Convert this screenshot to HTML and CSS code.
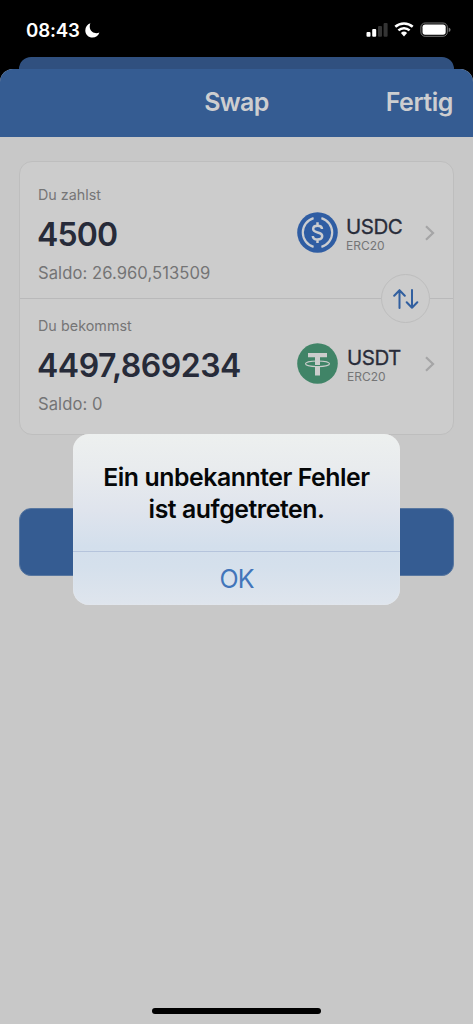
FILE: index.html
```html
<!DOCTYPE html>
<html lang="de">
<head>
<meta charset="utf-8">
<title>Swap</title>
<link rel="stylesheet" href="styles.css">
</head>
<body>
<div class="phone">
  <header class="status">
    <div class="clock"><span class="time">08:43</span>
      <svg class="moon" width="15" height="15" viewBox="0 0 15 15"><path d="M5.4.3C4 4 5 7 7.2 8.7 9.3 10.4 12.200 10.500 14.400 9.500 13.300 12.700 10.700 14.500 7.500 14.500 3.500 14.500.300 11.500.300 7.400.300 4.100 2.300 1.300 5.400.3Z" fill="#fff"/></svg>
    </div>
    <svg class="signals" width="86" height="18" viewBox="0 0 86 18">
      <rect x=".5" y="11" width="4" height="4.700" rx="1" fill="#fff"/>
      <rect x="6.200" y="8" width="4" height="7.700" rx="1" fill="#fff"/>
      <rect x="12" y="5" width="4" height="10.700" rx="1" fill="#343434"/>
      <rect x="17.600" y="2" width="4" height="13.700" rx="1" fill="#343434"/>
      <path d="M29.300 5.800A13 13 0 0 1 46.700 5.800M32.400 9.300A8.300 8.300 0 0 1 43.600 9.300" fill="none" stroke="#fff" stroke-width="2.500"/>
      <path d="M34.900 11.900A4.600 4.600 0 0 1 41.100 11.900L38 15.500Z" fill="#fff"/>
      <rect x="54.900" y="2" width="26.400" height="13.300" rx="4.200" fill="none" stroke="#777" stroke-width="1"/>
      <rect x="56.500" y="3.600" width="23.200" height="10.100" rx="2.600" fill="#fff"/>
      <path d="M82.700 6.400Q84.600 7 84.600 8.700T82.700 11Z" fill="#777"/>
    </svg>
  </header>
  <div class="back-sheet"></div>
  <main class="sheet">
    <nav class="navbar"><span></span><h1 class="title">Swap</h1><a class="done"><span class="done-text">Fertig</span></a></nav>
    <section class="card">
      <div class="row">
        <div class="amounts">
          <div class="label pay">Du zahlst</div>
          <div class="value v-pay">4500</div>
          <div class="balance b-pay">Saldo: 26.960,513509</div>
        </div>
        <div class="token">
          <svg width="41" height="41" viewBox="0 0 41 41"><circle cx="20.500" cy="20.500" r="20.300" fill="#2f5da3"/>
            <g fill="none" stroke="#cbcdd0" stroke-width="2.200"><path d="M16.600 6.100A15 15 0 0 0 16.600 34.900M24.400 6.100A15 15 0 0 1 24.400 34.900"/>
            <path stroke-width="2.500" d="M25 17C24.900 14.900 23.300 13.800 20.500 13.800 17.800 13.800 16.200 15 16.200 17 16.200 21.800 25.200 19 25.200 24 25.200 26.200 23.400 27.500 20.500 27.500 17.500 27.500 15.900 26.100 15.800 24M20.500 10.300V13.800M20.500 27.200V31"/></g></svg>
          <div class="names"><div class="symbol s-usdc">USDC</div><div class="network">ERC20</div></div>
          <svg class="chevron" width="12" height="18" viewBox="0 0 12 18"><path d="M2 2.200 9 9 2 15.800" fill="none" stroke="#a5a5a6" stroke-width="2.200"/></svg>
        </div>
      </div>
      <div class="row second">
        <div class="amounts">
          <div class="label get">Du bekommst</div>
          <div class="value v-get">4497,869234</div>
          <div class="balance b-get">Saldo: 0</div>
        </div>
        <div class="token">
          <svg width="41" height="41" viewBox="0 0 41 41"><circle cx="20.500" cy="20.500" r="20.300" fill="#408467"/>
            <path d="M11 10H30V14.300H23V32.500H18V14.300H11Z" fill="#cbcdcc"/>
            <ellipse cx="20.500" cy="20.800" rx="12" ry="2.800" fill="none" stroke="#cbcdcc" stroke-width="1.100"/><path d="M18 22.100H23V23Q20.500 23.200 18 23Z" fill="#408467"/></svg>
          <div class="names tether"><div class="symbol s-usdt">USDT</div><div class="network">ERC20</div></div>
          <svg class="chevron" width="12" height="18" viewBox="0 0 12 18"><path d="M2 2.200 9 9 2 15.800" fill="none" stroke="#a5a5a6" stroke-width="2.200"/></svg>
        </div>
      </div>
      <div class="switch"><svg width="26" height="22" viewBox="0 0 26 22"><path d="M6.500 20V2.300M1.200 7.700 6.500 2.200 11.800 7.700M19 2V19.700M13.700 14.300 19 19.800 24.300 14.300" fill="none" stroke="#315f9f" stroke-width="2" stroke-linecap="round" stroke-linejoin="round"/></svg></div>
    </section>
    <div class="submit"></div>
  </main>
  <div class="alert" role="alertdialog">
    <div class="message"><span class="m1">Ein unbekannter Fehler</span><span class="m2">ist aufgetreten.</span></div>
    <div class="ok"><span>OK</span></div>
  </div>
  <div class="home"></div>
</div>
</body>
</html>
```
FILE: styles.css
```css
* { box-sizing: border-box; }
body { margin: 0; background: #000; font-family: Inter, "Liberation Sans", sans-serif; }
.phone { position: relative; width: 473px; height: 1024px; overflow: hidden; background: #000; display: flex; flex-direction: column; }
.status { height: 57px; padding: 21px 21px 0 26px; display: flex; justify-content: space-between; align-items: flex-start; }
.clock { display: flex; align-items: center; gap: 5.500px; color: #fff; height: 19px; }
.time { font-size: 18.7px; font-weight: 600; line-height: 19px; letter-spacing: -.15px; }
.back-sheet { height: 12px; margin: 0 19px; border-radius: 12px 12px 0 0; background: #30507f; }
.sheet { flex: 1; border-radius: 13px 13px 0 0; overflow: hidden; background: #c8c8c8; }
.navbar { height: 68px; padding: 0 20px 2px; background: #355c92; color: #cdced0; display: grid; grid-template-columns: 1fr auto 1fr; align-items: center; font-size: 25px; font-weight: 600; line-height: 30px; letter-spacing: -.45px; }
.title { margin: 0; font: inherit; letter-spacing: -.7px; }
.done { text-align: right; }
.card { position: relative; margin: 24px 19px 0; height: 274px; border: 1px solid #bebebe; border-radius: 13px; background: #cccccc; }
.row { height: 137px; padding: 23px 16px 0 18px; display: flex; justify-content: space-between; border-bottom: 1px solid #b9b9ba; }
.row.second { border-bottom: 0; height: 136px; padding-top: 17px; }
.amounts { display: flex; flex-direction: column; align-items: flex-start; white-space: nowrap; }
.label { font-size: 14.300px; line-height: 18px; color: #757576; padding-top: 1px; }
.get { letter-spacing: .05px; }
.value { margin-top: 11px; font-size: 32px; line-height: 40px; font-weight: 600; color: #272b39; margin-left: -1px; }
.v-pay { letter-spacing: -.85px; }
.v-get { letter-spacing: -.5px; }
.balance { margin-top: 8px; font-size: 16.600px; line-height: 20px; color: #747475; letter-spacing: .06px; }
.token { width: 140px; height: 41px; margin-top: 27px; display: flex; align-items: center; }
.names { margin-left: 8px; width: 76px; padding-top: 3px; }
.names.tether { margin-left: 9px; width: 75px; }
.symbol { font-size: 20.500px; line-height: 22px; color: #292c3a; width: max-content; letter-spacing: -.5px; -webkit-text-stroke: .3px #292c3a; }
.network { font-size: 12px; line-height: 15px; color: #757576; width: max-content; }
.chevron { margin-left: 2px; }
.switch { position: absolute; right: 23px; top: 112px; width: 49px; height: 49px; border: 1px solid #bdbdbd; border-radius: 50%; background: #cccccc; display: flex; align-items: center; justify-content: center; }
.submit { margin: 73px 19px 0; height: 68px; border-radius: 12px; background: #355c92; border: 1px solid #5877a0; }
.alert { position: absolute; left: 73px; top: 434px; width: 327px; height: 171px; border-radius: 16px; background: linear-gradient(#edf0ef 0%, #e8ebee 22%, #dfe4ed 45%, #d3dfec 66%, #d5e0ec 78%, #dfe5ed 100%); box-shadow: inset 0 0 1px #f2f3f3; }
.message { height: 118px; padding-top: 27px; border-bottom: 1px solid #b5c4dc; display: flex; flex-direction: column; align-items: center; font-size: 24.800px; line-height: 32px; font-weight: 600; letter-spacing: -.43px; color: #050708; white-space: nowrap; }
.ok { height: 53px; text-align: center; font-size: 25px; line-height: 55px; letter-spacing: -1px; color: #4275ba; }
.home { position: absolute; left: 152px; top: 1008px; width: 169px; height: 6px; border-radius: 3px; background: #000; }
```
